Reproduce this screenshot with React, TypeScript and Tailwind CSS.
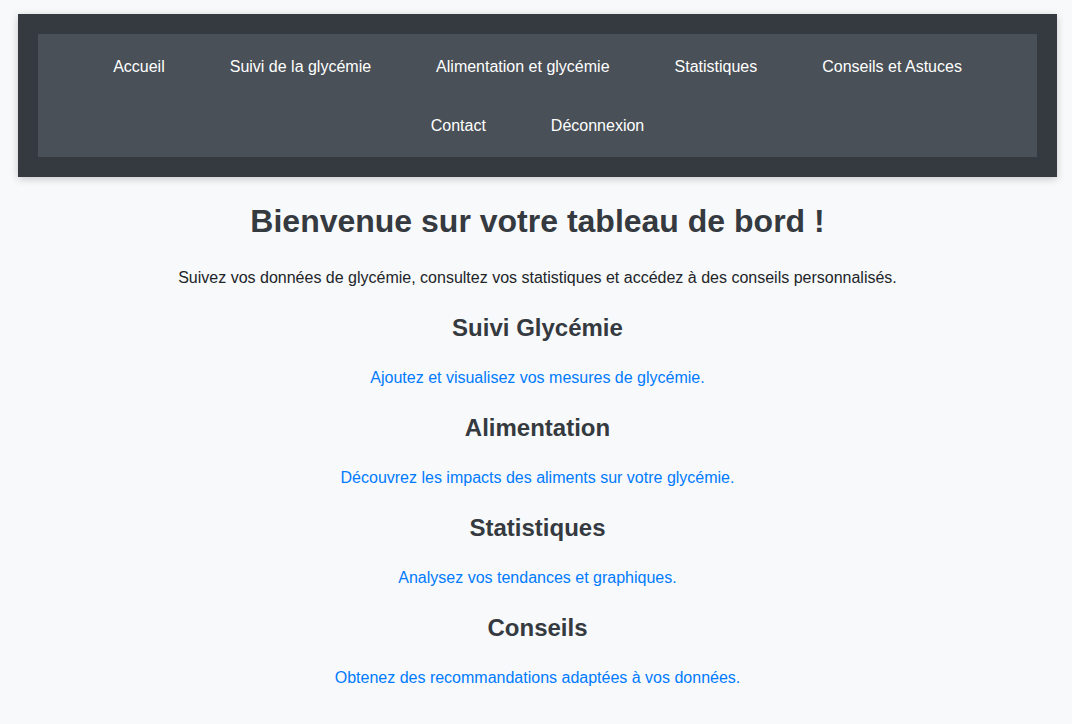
const navLinks = [
  "Accueil",
  "Suivi de la glycémie",
  "Alimentation et glycémie",
  "Statistiques",
  "Conseils et Astuces",
  "Contact",
  "Déconnexion",
];

const sections = [
  { title: "Suivi Glycémie", text: "Ajoutez et visualisez vos mesures de glycémie." },
  { title: "Alimentation", text: "Découvrez les impacts des aliments sur votre glycémie." },
  { title: "Statistiques", text: "Analysez vos tendances et graphiques." },
  { title: "Conseils", text: "Obtenez des recommandations adaptées à vos données." },
];

export default function App() {
  return (
    <div className="min-h-screen bg-[#f8f9fa] pt-3.5 pr-[15px] pb-8 pl-[18px] text-center font-['Liberation_Sans',Arial,sans-serif] text-base text-[#212529]">
      <header className="bg-[#343a40] p-5 shadow-[0_2px_8px_rgba(0,0,0,0.2)]">
        <nav className="bg-[#495057] px-5 pt-[3px] pb-0.5">
          <ul className="flex flex-wrap justify-center gap-x-[5px]">
            {navLinks.map((label) => (
              <li key={label} className="px-5 py-2.5">
                <a href="#" className="block p-2.5 leading-[19px] text-white">
                  {label}
                </a>
              </li>
            ))}
          </ul>
        </nav>
      </header>
      <main>
        <h1 className="mt-[26px] text-[32px] leading-[37px] font-bold text-[#343a40]">
          Bienvenue sur votre tableau de bord !
        </h1>
        <p className="mt-7 leading-5">
          Suivez vos données de glycémie, consultez vos statistiques et accédez à des conseils
          personnalisés.
        </p>
        {sections.map(({ title, text }) => (
          <section key={title} className="pt-6">
            <h2 className="text-2xl leading-8 font-bold text-[#343a40]">{title}</h2>
            <p className="mt-6 leading-5">
              <a href="#" className="text-[#007bff]">
                {text}
              </a>
            </p>
          </section>
        ))}
      </main>
    </div>
  );
}
